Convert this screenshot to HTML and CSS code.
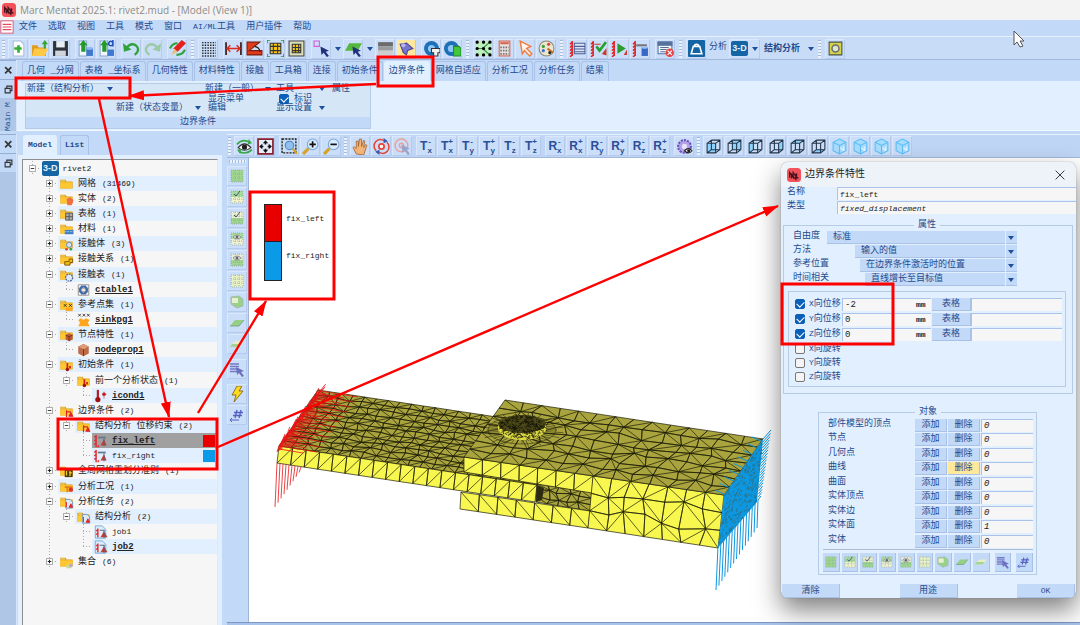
FILE: index.html
```
<!DOCTYPE html>
<html lang="zh-CN">
<head>
    <meta charset="UTF-8">
    <meta name="viewport" content="width=device-width, initial-scale=1.0">
    <title>Marc Mentat 2025.1</title>
    <link rel="stylesheet" href="styles.css">
</head>
<body>
    <header class="titlebar"><span data-icon="logo"></span>Marc Mentat 2025.1: rivet2.mud - [Model (View 1)]</header>

    <nav class="menubar">
        <span data-icon="menu"></span>
        <a href="#">文件</a><a href="#">选取</a><a href="#">视图</a><a href="#">工具</a><a href="#">模式</a><a href="#">窗口</a><a href="#"><span class="latin">AI/ML</span>工具</a><a href="#">用户插件</a><a href="#">帮助</a>
    </nav>

    <div class="toolbar main-toolbar">
        <i class="grip"></i>
        <div class="group" data-buttons="new open save"></div>
        <div class="group" data-buttons="import importd"></div>
        <div class="group" data-buttons="undo redo"></div>
        <div class="group" data-buttons="brush"></div>
        <i class="grip"></i>
        <div class="group" data-buttons="dots"></div>
        <div class="group" data-buttons="distance angle area frame"></div>
        <div class="group drop" data-buttons="pick"></div>
        <div class="group drop" data-buttons="pickface"></div>
        <div class="group" data-buttons="gradient light"></div>
        <div class="group" data-buttons="camera cameradoc"></div>
        <i class="grip"></i>
        <div class="group" data-buttons="nodes calc hand2 palette"></div>
        <i class="grip"></i>
        <div class="group" data-buttons="bclist bccheck bcplay bcdb"></div>
        <div class="group" data-buttons="cancel"></div>
        <i class="grip"></i>
        <div class="group" data-buttons="weight"></div>
        <span class="analysis">分析</span>
        <button class="drop wide"><b class="badge3d">3-D</b></button>
        <button class="drop flat">结构分析</button>
        <i class="grip"></i>
        <div class="group" data-buttons="circle"></div>
    </div>

    <section class="ribbon-area">
        <aside class="dock">
            <span data-icon="close"></span>
            <span data-icon="restore"></span>
            <span class="dock-tab">Main M</span>
        </aside>
        <div class="ribbon">
            <nav class="tabs">
                <a href="#">几何 _分网</a><a href="#">表格 _坐标系</a><a href="#">几何特性</a><a href="#">材料特性</a><a href="#">接触</a><a href="#">工具箱</a><a href="#">连接</a><a href="#">初始条件</a><a href="#" class="active">边界条件</a><a href="#">网格自适应</a><a href="#">分析工况</a><a href="#">分析任务</a><a href="#">结果</a>
            </nav>
            <div class="ribbon-group">
                <div class="ribbon-grid">
                    <button class="drop r-struct">新建（结构分析）</button>
                    <button class="drop r-general">新建（一般）</button>
                    <button class="drop r-tools">工具</button>
                    <button class="r-props">属性</button>
                    <button class="r-menu">显示菜单</button>
                    <label class="r-ident"><input type="checkbox" checked>标识</label>
                    <button class="drop r-state">新建（状态变量）</button>
                    <button class="r-edit">编辑</button>
                    <button class="drop r-set">显示设置</button>
                </div>
                <div class="ribbon-title">边界条件</div>
            </div>
        </div>
    </section>

    <main class="workspace">
        <aside class="dock">
            <span data-icon="close"></span>
            <span data-icon="restore"></span>
        </aside>
        <section class="model-panel">
            <nav class="tabs model-tabs"><a href="#" class="active">Model</a><a href="#">List</a></nav>
            <div class="tree" id="tree"></div>
        </section>
        <section class="view">
            <div class="toolbar view-toolbar">
                <i class="grip"></i>
                <div class="group" data-buttons="eye fit"></div>
                <div class="group" data-buttons="zoombox zoomin zoomout"></div>
                <i class="grip"></i>
                <div class="group" data-buttons="hand rotate rotpick"></div>
                <div class="group" data-axes="T"></div>
                <div class="group" data-axes="R"></div>
                <div class="group" data-buttons="gear"></div>
                <i class="grip"></i>
                <div class="group" data-buttons="cubefront cubeback cubeleft cuberight cubetop cubebottom iso iso iso iso"></div>
            </div>
            <div class="view-body">
                <div class="side-toolbar">
                    <i class="grip-h"></i>
                    <div class="column" data-buttons="selall selcheck selinv viseye viseye2 gridpale solid face facepale"></div>
                    <div class="column" data-buttons="listpick"></div>
                    <div class="column" data-buttons="bolt hash"></div>
                </div>
                <div class="canvas">
                    <svg class="model" id="model" aria-hidden="true"></svg>
                    <ul class="legend">
                        <li class="red">fix_left</li>
                        <li class="blue">fix_right</li>
                    </ul>
                </div>
            </div>
            <div class="statusbar"></div>
        </section>
    </main>

    <form class="dialog">
        <header><span data-icon="logo"></span><h2>边界条件特性</h2><button type="button" class="x" aria-label="Close" data-icon="thinx"></button></header>
        <div class="field"><label for="name">名称</label><input id="name" class="latin" value="fix_left"></div>
        <div class="field"><label for="type">类型</label><input id="type" class="latin italic" value="fixed_displacement"></div>

        <fieldset class="props">
            <legend>属性</legend>
            <div class="option opt-1"><label for="dof">自由度</label><span class="combo"><select id="dof"><option>标准</option></select></span></div>
            <div class="option opt-2"><label for="method">方法</label><span class="combo"><select id="method"><option>输入的值</option></select></span></div>
            <div class="option opt-3"><label for="ref">参考位置</label><span class="combo"><select id="ref"><option>在边界条件激活时的位置</option></select></span></div>
            <div class="option opt-4"><label for="time">时间相关</label><span class="combo"><select id="time"><option>直线增长至目标值</option></select></span></div>
            <div class="dofs" id="dofs"></div>
        </fieldset>

        <fieldset class="objects">
            <legend>对象</legend>
            <div class="object-rows" id="objects"></div>
            <div class="object-tools" data-buttons="selall selcheck selinv viseye viseye2 gridpale solid face facepale listpick hash"></div>
        </fieldset>

        <footer><button type="button">清除</button><button type="button">用途</button><button type="button" class="latin">OK</button></footer>
    </form>

    <svg class="notes" aria-hidden="true">
        <defs>
            <marker id="head" markerUnits="userSpaceOnUse" markerWidth="18" markerHeight="12" refX="15" refY="5" orient="auto"><path d="M0 0L16 5L0 10z" fill="#fe0000"/></marker>
        </defs>
        <g fill="none" stroke="#fe0000" stroke-width="3">
            <rect x="16" y="78" width="114" height="20"/>
            <rect x="378" y="57" width="55" height="29"/>
            <rect x="250" y="192" width="84" height="107"/>
            <rect x="58" y="419" width="159" height="50"/>
            <rect x="782" y="284" width="111" height="60"/>
        </g>
        <g stroke="#fe0000" stroke-width="2.4">
            <path d="M376 84L129 96" marker-end="url(#head)"/>
            <path d="M99 99L169 417" marker-end="url(#head)"/>
            <path d="M198 413L266 301" marker-end="url(#head)"/>
            <path d="M218 447L778 206" marker-end="url(#head)"/>
        </g>
        <path d="M1014 31v14l3-3 3 5 3-1-3-5h4z" fill="#fff" stroke="#555"/>
    </svg>

    <script src="script.js"></script>
</body>
</html>
```
FILE: styles.css
```
* {
    box-sizing: border-box;
}
body {
    margin: 0;
    height: 100vh;
    display: flex;
    flex-direction: column;
    overflow: hidden;
    position: relative;
    background-color: #c3d9f8;
    color: #234a8c;
    font-family: "Liberation Mono", "Noto Sans CJK SC", monospace;
    font-size: 9px;
    line-height: 10px;
}
a {
    color: inherit;
    text-decoration: none;
}
button, input, select {
    font: inherit;
    color: inherit;
    margin: 0;
    padding: 0;
    border: 0;
    background: none;
    border-radius: 0;
    white-space: nowrap;
}
svg {
    display: block;
}
.latin {
    font-size: 8px;
}
.titlebar {
    display: flex;
    align-items: center;
    gap: 4px;
    height: 20px;
    padding-left: 2px;
    background-color: #f3f3f3;
    color: #8b8b8b;
    font-family: "Open Sans", sans-serif;
    font-size: 10px;
}
.titlebar svg {
    width: 14px;
    height: 14px;
}
.menubar {
    display: flex;
    align-items: center;
    gap: 11px;
    height: 16px;
    padding-bottom: 2px;
}
.menubar span[data-icon] {
    margin-right: -6px;
}
.menubar svg {
    width: 14px;
    height: 14px;
}

/* toolbars */
.toolbar {
    display: flex;
    align-items: center;
    gap: 5px;
    background-color: #c8dcf8;
}
.main-toolbar {
    height: 24px;
    padding: 1px 0 0 2px;
    border-top: 1px solid #e6f1fe;
    border-bottom: 1px solid #a3b8da;
}
.group {
    display: flex;
    gap: 1px;
    align-items: center;
}
.toolbar button, .column button {
    width: 20px;
    height: 20px;
    display: flex;
    align-items: center;
    justify-content: center;
    background-color: #cbdef9;
    border: 1px solid #dbe8fb;
    border-right-color: #b5cbed;
    border-bottom-color: #b5cbed;
}
.toolbar svg {
    width: 17px;
    height: 17px;
}
.toolbar .on {
    background-color: #ffe79c;
}
.grip {
    width: 3px;
    height: 18px;
    margin: 0 -1px;
    background: repeating-linear-gradient(#a5bbdc 0 1px, #e9f2fe 1px 3px);
}
.main-toolbar .grip:first-child {
    margin: 0 -2px 0 0;
}
.drop::after {
    content: "";
    border: 3px solid transparent;
    border-top: 4px solid #1f4f9c;
    border-bottom: 0;
}
.group.drop {
    gap: 4px;
    margin-right: -3px;
}
.analysis {
    padding-bottom: 4px;
    margin: 0 -3px 0 -2px;
}
.toolbar .wide {
    width: 31px;
    gap: 4px;
}
.toolbar .flat {
    width: auto;
    gap: 8px;
    margin-left: -1px;
    border: 0;
    background: none;
    font-weight: bold;
}
.badge3d {
    padding: 3px 1px;
    border-radius: 2px;
    background-color: #1565a5;
    color: #e3effb;
    font: bold 9px/9px "Liberation Sans", sans-serif;
}

/* ribbon */
.ribbon-area {
    display: flex;
    height: 71px;
}
.dock {
    flex: none;
    width: 17px;
    display: flex;
    flex-direction: column;
    align-items: center;
    background-color: #b0c6e6;
    border-right: 1px solid #d6e5fa;
}
.dock span[data-icon] {
    width: 100%;
    height: 19px;
    padding: 5px 0 0 4px;
    border-top: 1px solid #96aed3;
    background-color: #c3d9f8;
}
.dock svg {
    width: 9px;
    height: 9px;
}
.dock-tab {
    flex: 1;
    writing-mode: vertical-rl;
    transform: rotate(180deg);
    font-size: 8px;
}
.ribbon {
    flex: 1;
    display: flex;
    flex-direction: column;
    background-color: #e2effe;
    border-bottom: 1px solid #f2f8ff;
}
.tabs {
    display: flex;
    gap: 1px;
    align-items: flex-end;
    height: 21px;
    padding: 0 5px;
    background-color: #c3d9f8;
    white-space: pre;
}
.tabs a {
    padding: 4px 4px 5px;
    border: 1px solid #a9c1e6;
    border-bottom: 0;
    border-radius: 3px 3px 0 0;
}
.tabs .active {
    background-color: #e2effe;
    border-color: #e2effe;
}
.ribbon-group {
    width: 346px;
    margin: 2px 0 0 8px;
    border: 1px solid #b5cbe6;
    background-color: #d5e6f6;
}
.ribbon-grid {
    display: grid;
    grid-template-columns: 89px 92px 68px 56px 1fr;
    grid-template-rows: 10px 9px 10px;
    padding: 0 0 4px 1px;
}
.ribbon-grid button, .ribbon-grid label {
    display: flex;
    align-items: center;
    line-height: 10px;
    white-space: nowrap;
}
.ribbon-grid .drop {
    justify-content: space-between;
    padding-right: 7px;
}
.ribbon-grid .r-struct { grid-area: 1 / 1; padding-right: 3px; }
.ribbon-grid .r-general { grid-area: 1 / 3; margin-left: -3px; padding-right: 5px; }
.r-tools { grid-area: 1 / 4; }
.r-props { grid-area: 1 / 5; }
.r-menu { grid-area: 2 / 3; }
.r-ident { grid-area: 2 / 4; padding-left: 3px; gap: 5px; }
.r-state { grid-area: 3 / 2; }
.r-edit { grid-area: 3 / 3; }
.r-set { grid-area: 3 / 4; }
.ribbon-title {
    height: 11px;
    background-color: #c3d9f8;
    text-align: center;
}
input[type="checkbox"] {
    appearance: none;
    flex: none;
    width: 10px;
    height: 10px;
    border: 1px solid #777;
    border-radius: 2px;
    background-color: #f4f4f4;
}
input[type="checkbox"]:checked {
    display: flex;
    justify-content: center;
    border-color: #0a5fb8;
    background-color: #0a5fb8;
}
input[type="checkbox"]:checked::after {
    content: "";
    width: 4px;
    height: 6px;
    border: solid #fff;
    border-width: 0 1px 1px 0;
    transform: rotate(45deg);
}

/* model tree */
.workspace {
    flex: 1;
    min-height: 0;
    display: flex;
    padding-top: 3px;
}
.model-panel {
    flex: none;
    width: 204px;
    margin-left: 1px;
    display: flex;
    flex-direction: column;
    background-color: #e2effe;
}
.model-tabs {
    font-size: 8px;
    font-weight: bold;
    gap: 3px;
    border-bottom: 0;
}
.tree {
    flex: 1;
    margin: 4px 4px 0 4px;
    padding: 1px 0 0 1px;
    overflow: hidden;
    border: 1px solid #8e8e8e;
    border-bottom: 0;
    border-right-color: #e8e8e8;
    background-color: #f6f6f6;
    color: #222;
}
.tree-row {
    display: flex;
    height: 15px;
}
.tree-row:nth-child(7n) {
    margin-bottom: 1px;
}
.tree-row .cell {
    flex: none;
    width: 17px;
    display: grid;
    place-items: center;
}
.cell.line {
    background: repeating-linear-gradient(#aaa 0 1px, transparent 1px 3px) 8px 0 / 1px 100% no-repeat;
}
.cell.tee, .cell.box {
    background: repeating-linear-gradient(#aaa 0 1px, transparent 1px 3px) 8px 0 / 1px 100% no-repeat,
        repeating-linear-gradient(90deg, #aaa 0 1px, transparent 1px 3px) 8px 7px / 9px 1px no-repeat;
}
.cell.elbow {
    background: repeating-linear-gradient(#aaa 0 1px, transparent 1px 3px) 8px 0 / 1px 8px no-repeat,
        repeating-linear-gradient(90deg, #aaa 0 1px, transparent 1px 3px) 8px 7px / 9px 1px no-repeat;
}
.cell svg {
    width: 7px;
    height: 7px;
}
.node {
    flex: 1;
    display: flex;
    align-items: center;
    gap: 4px;
    padding: 0 2px 0 1px;
    white-space: pre;
}
.node > svg {
    flex: none;
    width: 15px;
    height: 14px;
}
.tree-row:nth-child(even) .node {
    background-color: #e2effe;
}
.tree-row .node.selected {
    background-color: #a0a0a0;
}
.node .count {
    font-size: 8px;
    margin-left: 2px;
}
.node .current {
    font-weight: bold;
    text-decoration: underline;
}
.node .swatch {
    width: 12px;
    height: 12px;
    margin-left: auto;
}
.swatch.red { background-color: #e80000; }
.swatch.blue { background-color: #0a9ae8; }

/* 3-D view */
.view {
    flex: 1;
    min-width: 0;
    display: flex;
    flex-direction: column;
    padding-left: 5px;
}
.view-toolbar {
    height: 24px;
    gap: 4px;
    padding-left: 2px;
    border-top: 1px solid #e6f1fe;
    border-bottom: 1px solid #a3b8da;
    background-color: #bfd5f5;
}
.view-body {
    flex: 1;
    min-height: 0;
    display: flex;
}
.side-toolbar {
    flex: none;
    width: 22px;
    display: flex;
    flex-direction: column;
    gap: 5px;
    border-right: 1px solid #9fb4d6;
}
.side-toolbar svg {
    width: 16px;
    height: 16px;
}
.grip-h {
    height: 3px;
    margin: 2px 2px -2px;
    background: repeating-linear-gradient(90deg, #a5bbdc 0 1px, #e9f2fe 1px 3px);
}
.column {
    display: flex;
    flex-direction: column;
    gap: 1px;
}
.canvas {
    flex: 1;
    position: relative;
    background-color: #fff;
}
.model {
    width: 100%;
    height: 100%;
}
.statusbar {
    height: 3px;
    border-top: 1px solid #7d97c4;
    background-color: #a9c4ec;
}
.legend {
    position: absolute;
    left: 15px;
    top: 46px;
    margin: 0;
    padding: 0;
    list-style: none;
    color: #222;
    font-size: 8px;
}
.legend li {
    display: flex;
    gap: 4px;
    height: 37px;
    line-height: 30px;
}
.legend li::before {
    content: "";
    width: 16px;
    height: 38px;
    border: 1px solid #222;
}
.legend .red::before { background-color: #e80000; }
.legend .blue::before { background-color: #0a9ae8; }
.axis {
    display: flex;
    align-items: center;
    color: #2a4f96;
    font: bold 12px/12px "Liberation Sans", sans-serif;
}
.axis-mark {
    display: flex;
    flex-direction: column;
    padding-bottom: 1px;
    font-size: 8px;
    line-height: 9px;
}

/* dialog */
.dialog {
    position: absolute;
    top: 162px;
    right: 4px;
    width: 295px;
    display: flex;
    flex-direction: column;
    overflow: hidden;
    border-radius: 7px;
    background-color: #e2effe;
    box-shadow: 0 0 1px #666, 0 12px 26px rgba(0, 0, 0, 0.5);
}
.dialog header {
    display: flex;
    align-items: center;
    gap: 4px;
    height: 25px;
    padding: 0 9px 0 6px;
    background-color: #eef3f9;
}
.dialog header svg {
    width: 14px;
    height: 14px;
}
.dialog h2 {
    flex: 1;
    margin: 0;
    color: #222;
    font-size: 10px;
    font-weight: normal;
}
.dialog input:not([type]) {
    min-width: 0;
    height: 13px;
    padding-left: 2px;
    border-top: 1px solid #a9c3ea;
    border-left: 1px solid #a9c3ea;
    background-color: #f6f6f6;
    color: #222;
}
.dialog .italic {
    font-style: italic;
}
.field {
    display: flex;
    margin-bottom: 1px;
    padding-left: 6px;
}
.field label {
    width: 50px;
}
.field input {
    flex: 1;
}
fieldset {
    min-width: 0;
    margin: 0;
    padding: 0;
    border: 1px solid #b5cbe6;
}
legend {
    margin: 0 auto;
    padding: 0 4px;
}
.props {
    margin: 5px 3px 0 2px;
    padding: 1px 6px 6px 4px;
}
.option {
    display: flex;
    height: 14px;
    padding: 0 49px 0 5px;
}
.opt-1 label { width: 34px; }
.opt-2 label { width: 62px; }
.opt-3 label { width: 67px; }
.opt-4 label { width: 72px; }
.combo {
    flex: 1;
    display: flex;
    position: relative;
}
.combo select {
    appearance: none;
    flex: 1;
    height: 13px;
    padding-left: 6px;
    line-height: 13px;
    background-color: #c3d9f8;
    border-bottom: 1px solid #aac2e6;
}
.combo::after {
    content: "";
    position: absolute;
    right: 3px;
    top: 5px;
    border: 3px solid transparent;
    border-top: 4px solid #1f4f9c;
    border-bottom: 0;
}
.combo::before {
    content: "";
    position: absolute;
    right: 11px;
    top: 0;
    width: 1px;
    height: 13px;
    background-color: #e2effe;
}
.dofs {
    margin-top: 4px;
    padding: 5px 3px 2px 6px;
    border: 1px solid #b5cbe6;
}
.dof {
    display: flex;
    align-items: center;
    height: 14px;
}
.dof.active {
    margin-bottom: 1px;
}
.dof label {
    width: 33px;
    margin-left: 4px;
    white-space: nowrap;
}
.dof .value {
    width: 64px;
}
.dof .unit {
    width: 25px;
    height: 13px;
    padding: 1px 0 0 10px;
    border-top: 1px solid #a9c3ea;
    background-color: #f6f6f6;
    color: #222;
    font-size: 8px;
    font-weight: bold;
}
.dof .table {
    flex: 1;
}
.dof button, .object-rows button, .dialog footer button {
    height: 13px;
    background-color: #c3d9f8;
    border-right: 1px solid #a9c1e6;
    border-bottom: 1px solid #a9c1e6;
}
.dof button {
    width: 39px;
    margin-left: 1px;
}
.objects {
    margin: 13px 39px 0 37px;
    padding: 2px 3px 2px 4px;
}
.object-rows {
    display: grid;
    grid-template-columns: 1fr 32px 32px 52px;
    grid-auto-rows: 1fr;
    gap: 0 1px;
    min-height: 130px;
    padding-left: 5px;
}
.object-rows .hot {
    background-color: #ffe79c;
}
.object-tools {
    display: flex;
    gap: 2px;
    padding-top: 3px;
    border-top: 1px solid #a9bcd6;
}
.object-tools button {
    flex: 1;
    height: 19px;
    padding: 1px;
    background-color: #c3d9f8;
    border-right: 1px solid #a9c1e6;
    border-bottom: 1px solid #a9c1e6;
}
.object-tools button:nth-last-child(-n+2) {
    margin-left: 3px;
}
.object-tools svg {
    width: 100%;
    height: 14px;
}
.dialog footer {
    display: flex;
    justify-content: space-between;
    margin-top: 9px;
    padding: 0 1px;
}
.dialog footer button {
    width: 58px;
    height: 14px;
}
.notes {
    position: absolute;
    inset: 0;
    width: 100%;
    height: 100%;
    pointer-events: none;
}
```
FILE: script.js
```
const folder = '<path d="M1 3h6l1 2h7v8H1z" fill="#d99a10"/><path d="M1 6h14l-1 7H1z" fill="#ffc832"/><path d="M2 4h4l1 1H2z" fill="#ffe48a"/>';
const leafMesh = (upper, lower) => `<path d="M2 2h12v6H2z" fill="${upper}"/><path d="M2 8h12v6H2z" fill="${lower}"/><path d="M2 2h12v12H2zM6 2v12M10 2v12M2 6h12M2 10h12" fill="none" stroke="#8aabaa" stroke-width=".8" stroke-dasharray="1 1"/>`;
const cube = (fill) => `${fill}<path d="M2 5h8v9H2zM6 2h8v9M2 5l4-3M10 5l4-3M10 14l4-3M6 2v9h8M2 14l4-3" fill="none" stroke="#243447"/>`;
const magnifier = (sign) => `<circle cx="10" cy="6" r="5" fill="#d9ecff" stroke="#7aa6d6"/><path d="M6 10l-5 5" stroke="#d6a32a" stroke-width="3"/><path d="${sign}" stroke="#111" stroke-width="1.6"/>`;
const wall = '<path d="M3 1v14M1 4l2-2M1 7l2-2M1 10l2-2M1 13l2-2M1 16l2-2" fill="none" stroke="#e02020" stroke-width="1.4"/>';
const pointer = '<path d="M7 6l8 4-3 1 3 4-2 1-3-4-2 2z" fill="#23307d"/>';
const eyeball = '<path d="M4 6q4-4 8 0q-4 4-8 0z" fill="#eee" stroke="#777" stroke-width=".7"/><circle cx="8" cy="6" r="1.5" fill="#666"/>';

const icons = {
    logo: '<rect width="16" height="16" rx="4" fill="#f4525a"/><path d="M3 11V5l4 6V5l4 6V6M5 12V7l5 6V8l3 4" fill="none" stroke="#43131c" stroke-width="1.3"/>',
    menu: '<rect x="1" y="1" width="14" height="14" fill="#fff" stroke="#e34b60"/><path d="M3 5h10M3 8h10M3 11h10" stroke="#e34b60" stroke-width="1.3"/>',
    close: '<path d="M2 2l11 11M13 2L2 13" stroke="#333" stroke-width="3"/>',
    thinx: '<path d="M3 3l10 10M13 3L3 13" stroke="#333" stroke-width="1.1"/>',
    restore: '<path d="M5 6V2h9v8h-3M2 6h9v8H2z" fill="none" stroke="#333" stroke-width="2"/>',
    new: '<path d="M3 1h7l3 3v11H3z" fill="#fff" stroke="#a9bed8"/><path d="M8 5v7M4 8h7" stroke="#36ae34" stroke-width="2.5"/>',
    open: '<path d="M1 5h5l1 2h7v8H1z" fill="#e29a1c"/><path d="M3 8h13l-3 7H1z" fill="#ffc845"/><path d="M12 8V4h-2l3-4 3 4h-2v4z" fill="#36a432"/>',
    save: '<path d="M1 1h14v14H1z" fill="#30343a"/><path d="M4 1h8v6H4z" fill="#e8eef5"/><path d="M3 10h10v5H3z" fill="#cfd5dd"/>',
    import: '<path d="M2 1h7v14H2z" fill="#f2f7fd" stroke="#8ca8cb"/><path d="M4 11V5H2l4-5 4 5H8v6z" fill="#239a2c"/><path d="M9 8h6v7H9z" fill="#3d78cf"/><ellipse cx="12" cy="8" rx="3" ry="1.3" fill="#8db7f0"/>',
    importd: '<path d="M2 1h7v14H2z" fill="#f2f7fd" stroke="#8ca8cb"/><path d="M4 11V5H2l4-5 4 5H8v6z" fill="#239a2c"/><path d="M9 9h6v6H9z" fill="#3d78cf"/><path d="M14 0v6M14 4a2 2 0 1 0-3 1q2 1 3-1" fill="none" stroke="#1d4bc0" stroke-width="1.4"/>',
    undo: '<path d="M3 8q4-6 9-3q5 4-1 9" fill="none" stroke="#2fa33a" stroke-width="2.2"/><path d="M0 3l1 8 7-2z" fill="#2fa33a"/>',
    redo: '<path d="M13 8q-4-6-9-3q-5 4 1 9" fill="none" stroke="#9dc9a6" stroke-width="2.2"/><path d="M16 3l-1 8-7-2z" fill="#9dc9a6"/>',
    brush: '<path d="M1 8q2-5 7-5M15 9q-2 5-8 5" stroke="#2fa33a" stroke-width="2" fill="none"/><path d="M12 0l4 3-8 8-4-3z" fill="#e2201c"/><path d="M5 8l3 3-6 3z" fill="#e9bc85"/>',
    dots: '<path d="M2 2.5h13M2 5h13M2 7.5h13M2 10h13M2 12.5h13M2 15h13" stroke="#222" stroke-width="1.3" stroke-dasharray="1.3 1.2"/>',
    distance: '<path d="M1 2v12M15 2v12" stroke="#3c1a18" stroke-width="1.6"/><path d="M2 8h12M5 5L2 8l3 3M11 5l3 3-3 3" stroke="#d92b1c" fill="none" stroke-width="1.4"/>',
    angle: '<path d="M1 2h12L3 10h12v4H1z" fill="#e03a1b" stroke="#7a1d10"/><path d="M8 6q5 1 5 5" stroke="#222" fill="none"/>',
    area: '<path d="M3 3h10v10H3z" fill="#f3c818" stroke="#333"/><path d="M6 3v10M10 3v10M3 6h10M3 10h10" stroke="#333"/><path d="M0 3V0h3M13 0h3v3M0 13v3h3M16 13v3h-3" stroke="#2d9c30" fill="none" stroke-width="1.5"/>',
    frame: '<path d="M1 1h14v14H1z" fill="#dcdfb9" stroke="#444"/><path d="M4 4h8v8H4z" fill="#f3c818" stroke="#333"/><path d="M7 4v8M10 4v8M4 7h8M4 10h8" stroke="#333"/>',
    pick: `<path d="M1 1h5v5H1z" fill="none" stroke="#d35ce0"/>${pointer}`,
    pickface: `<path d="M4 3h12l-4 7H0z" fill="#55b83c"/>${pointer}`,
    gradient: '<path d="M1 2h14v4H1z" fill="#6c6c6c"/><path d="M1 6h14v4H1z" fill="#9b9b9b"/><path d="M1 10h14v4H1z" fill="#cdcdcd"/>',
    light: '<path d="M2 4l6-1 6 5-5 2-1 4-3-2z" fill="#7774cd" stroke="#4a468f"/><circle cx="5" cy="5" r="2" fill="#b6b3ef"/>',
    camera: '<circle cx="8" cy="8" r="7" fill="#1b70b8"/><circle cx="8" cy="8" r="3.4" fill="#8fc6f3"/><path d="M8 8h8v4h-2v3h-4v-3H8z" fill="#f2f2f2" stroke="#333"/>',
    cameradoc: '<circle cx="7" cy="8" r="7" fill="#1b70b8"/><circle cx="7" cy="8" r="3.4" fill="#8fc6f3"/><path d="M9 6h5l2 2v7H9z" fill="#42c93b" stroke="#1d8a28"/>',
    nodes: '<path d="M1 1h14v14H1z" fill="#bdeebd"/><path d="M2 8h7M7 8l7-6M7 8l7 6" stroke="#2f8a49" fill="none"/><path d="M2 2h.1M8 2h.1M14 2h.1M2 8h.1M8 8h.1M2 14h.1M8 14h.1M14 14h.1M14 8h.1" stroke="#000" stroke-width="3" stroke-linecap="round"/>',
    calc: '<rect x="3" y="1" width="10" height="14" fill="#e9e1df" stroke="#d9654d"/><path d="M4 3h8" stroke="#d9654d" stroke-width="2"/><path d="M4 7h8M4 10h8M4 13h8" stroke="#777" stroke-width="1.6" stroke-dasharray="1.5 1"/>',
    hand2: '<path d="M3 1l10 5-4 2 5 5-2 2-5-5-2 3z" fill="#fff4ea" stroke="#f07a3c" stroke-width="1.3"/>',
    palette: '<circle cx="8" cy="8" r="7" fill="#ece6cf" stroke="#8c8870"/><circle cx="5" cy="6" r="1.5" fill="#35a33c"/><circle cx="10" cy="4" r="1.5" fill="#dd3e35"/><circle cx="5" cy="10" r="1.5" fill="#3c6edb"/><path d="M9 8l5 4" stroke="#c36a24" stroke-width="2"/><circle cx="11" cy="12" r="1.4" fill="#222"/>',
    bclist: `${wall}<path d="M5 3h10v10H5z" fill="#dbe6f8" stroke="#4b5f95"/><path d="M5 6h10M5 8.500h10M5 11h10" stroke="#4b5f95"/>`,
    bccheck: `${wall}<path d="M4 4h6M12 13l3-4v5z" stroke="#c83a2a" fill="#c83a2a"/><path d="M6 6l3 4 6-8" fill="none" stroke="#28a02c" stroke-width="2.4"/>`,
    bcplay: `${wall}<path d="M6 3l8 5-8 5z" fill="#2d9c30"/><path d="M12 14l3-5v5z" fill="#c83a2a"/>`,
    bcdb: `${wall}<path d="M4 5h10" stroke="#777" stroke-width="2"/><path d="M9 7h6v8H9z" fill="#3767c8"/><ellipse cx="12" cy="7" rx="3" ry="1.3" fill="#9dbdf0"/>`,
    cancel: '<path d="M1 2h13v11H1z" fill="#f3f6fb" stroke="#56729c"/><path d="M1 2h13v3H1zM3 7h8M3 9h6M3 11h5" fill="#56729c" stroke="#56729c"/><circle cx="12" cy="12" r="4" fill="#e54545"/><path d="M10 10l4 4M14 10l-4 4" stroke="#fff"/>',
    weight: '<rect width="16" height="16" rx="1" fill="#1565a5"/><path d="M5 6h6l2 7H3zM6 6a2 2 0 1 1 4 0" fill="none" stroke="#fff" stroke-width="1.5"/>',
    circle: '<path d="M2 2h12v12H2z" fill="#d8d344" stroke="#47534c"/><circle cx="8" cy="8" r="3.3" fill="#e2e6c5" stroke="#65707c" stroke-width="1.4"/>',
    eye: '<path d="M2 9q6-7 12 0q-6 5-12 0z" fill="#fff" stroke="#333"/><circle cx="8" cy="8.500" r="2.500" fill="#222"/><path d="M1 6q5-6 12-2M15 11q-5 5-12 2" fill="none" stroke="#38a84b" stroke-width="1.6"/><path d="M12 1l3 4-4 1zM4 15l-3-4 4-1z" fill="#38a84b"/>',
    fit: '<path d="M1 1h14v14H1z" fill="#e6eefb" stroke="#8c1f2c" stroke-width="1.6"/><path d="M8 2l2.500 3h-5zM8 14l2.500-3h-5zM2 8l3-2.500v5zM14 8l-3-2.500v5z" fill="#111"/><path d="M8 4v2M8 10v2M4 8h2M10 8h2" stroke="#111" stroke-width="1.6"/>',
    zoombox: '<path d="M1 1h13v13H1z" fill="none" stroke="#222" stroke-width="1.3" stroke-dasharray="2 1"/><circle cx="8" cy="7" r="4" fill="#8fc0f0" stroke="#4b81bf"/><path d="M11 10l4 5" stroke="#d6a32a" stroke-width="2"/>',
    zoomin: magnifier('M10 3v6M7 6h6'),
    zoomout: magnifier('M7 6h6'),
    hand: '<path d="M4 15l-3-6 1-1 2 2V3h2v5l1-7h2v7l2-6 1 1-1 6 2-3 1 1-3 9z" fill="#f2b479" stroke="#9e5b25" stroke-width=".7"/>',
    rotate: '<circle cx="8" cy="8" r="2.500" fill="#fff" stroke="#e84435" stroke-width="1.6"/><path d="M3 12a6 6 0 0 1 8-9M13 4a6 6 0 0 1-8 9" fill="none" stroke="#e84435" stroke-width="1.4"/><path d="M10 0l4 3-4 2zM6 16l-4-3 4-2z" fill="#355bb5"/>',
    rotpick: '<circle cx="7" cy="7" r="6" fill="none" stroke="#e9a19b" stroke-width="1.4"/><circle cx="7" cy="7" r="2" fill="none" stroke="#e9a19b" stroke-width="1.4"/><path d="M7 6l8 4-3 1 3 4-2 1-3-4-2 2z" fill="#9aa3cd"/>',
    gear: '<circle cx="8" cy="8" r="6" fill="#b2a1e8" stroke="#6d56bd" stroke-width="2" stroke-dasharray="2 1"/><circle cx="8" cy="8" r="2.500" fill="#e8e2fa"/><path d="M8 12q4-4 7 0q-3 4-7 0z" fill="#fff" stroke="#222"/><circle cx="12" cy="12" r="1.5" fill="#222"/>',
    cubefront: cube('<path d="M2 5h8v9H2z" fill="#8cd4ff"/>'),
    cubeback: cube('<path d="M6 2h8v9H6z" fill="#8cd4ff"/>'),
    cubeleft: cube('<path d="M2 5l4-3v9l-4 3z" fill="#8cd4ff"/>'),
    cuberight: cube('<path d="M10 5l4-3v9l-4 3z" fill="#8cd4ff"/>'),
    cubetop: cube('<path d="M2 5l4-3h8l-4 3z" fill="#8cd4ff"/>'),
    cubebottom: cube('<path d="M2 14l4-3h8l-4 3z" fill="#8cd4ff"/>'),
    iso: '<path d="M8 1l6 3v8l-6 3-6-3V4z" fill="#a8dcff" stroke="#5cbdf5"/><path d="M2 4l6 3 6-3M8 7v8" fill="none" stroke="#5cbdf5"/><path d="M9 9l3 3M12 8v4" stroke="#ecf8ff"/>',
    selall: leafMesh('#9fd68c', '#9fd68c'),
    selcheck: leafMesh('#a9dd9c', '#f5f3c8') + '<path d="M5 5l2 2 4-5" fill="none" stroke="#456"/>',
    selinv: leafMesh('#eeeed0', '#9fd68c') + '<path d="M5 5l2 2 4-5" fill="none" stroke="#456"/>',
    viseye: leafMesh('#a9dd9c', '#f2f1d2') + eyeball,
    viseye2: leafMesh('#ebebdb', '#9fd68c') + eyeball,
    gridpale: leafMesh('#ebf0c2', '#ebf0c2'),
    solid: '<path d="M2 3l8-1 4 3v7l-6 2-6-4z" fill="#9ad08c" stroke="#a4bcb0"/><path d="M3 4h6v5H3z" fill="#e8efd0"/>',
    face: '<path d="M6 5h9l-5 6H1z" fill="#95ce85"/><path d="M1 11h9l5-6" fill="none" stroke="#78a78a"/>',
    facepale: '<path d="M6 5h9l-5 6H1z" fill="#e8edc6"/><path d="M1 11h9l2-3H3z" fill="#a5d492"/>',
    listpick: '<path d="M1 3h9M1 5.500h9M1 8h9M1 10.500h9" stroke="#7479c4" stroke-width="1.6"/><path d="M7 6l8 4-3 1 3 4-2 1-3-4-2 2z" fill="#6c71bf"/>',
    bolt: '<path d="M8 0h5l-3 5h4L5 16l2-7H3z" fill="#ffd91f" stroke="#8f7420"/>',
    hash: '<path d="M8 3L6 11M12 3l-2 8M5 5.500h9M4 8.500h9" stroke="#5360bf" stroke-width="1.3"/><path d="M1 13h9M1 13l2-2M1 13l2 2" stroke="#5360bf" fill="none"/>',
    folder,
    fsolid: folder + '<path d="M8 8l4-2 4 3-2 6H9z" fill="#ee7048"/>',
    ftable: folder + '<path d="M7 7h8v8H7z" fill="#aaa" stroke="#555"/><path d="M11 7v8M7 11h8" stroke="#555"/>',
    fmat: folder + '<path d="M6 9h10v5H6z" fill="#3e7fc4"/><path d="M6 11h10" stroke="#a4cdf2" stroke-dasharray="2 1"/>',
    fbody: folder + '<circle cx="11" cy="9" r="3" fill="#d7e3f7" stroke="#5481c2"/><circle cx="8" cy="14" r="1.5" fill="#e03b2d"/><circle cx="13" cy="14" r="1.5" fill="#35a043"/>',
    frel: folder + '<path d="M6 11h5V8h4v4h-3v3H6z" fill="#f5bd12" stroke="#735105"/>',
    fctab: folder + '<circle cx="11" cy="11" r="4" fill="#dfe9f7" stroke="#48659c" stroke-width="1.5" stroke-dasharray="2 1"/>',
    ctab: '<path d="M2 2h12v12H2zM2 6h12M2 10h12M6 2v12M10 2v12" fill="none" stroke="#777" stroke-width=".8"/><circle cx="8" cy="8" r="4" fill="none" stroke="#416bab" stroke-width="2.500"/>',
    fref: folder + '<path d="M5 7l3 3M8 7l-3 3M11 7l3 3M14 7l-3 3" stroke="#222"/><path d="M7 11h8v4H7z" fill="#ffa51e"/>',
    ref: '<path d="M2 8l3-2 3 2 3-2 4 2-2 3 2 4H2l2-4z" fill="#ffa51e"/><path d="M2 1l3 3M5 1L2 4M7 1l3 3M10 1L7 4M12 1l3 3M15 1l-3 3" stroke="#222" stroke-width=".9"/>',
    fnode: folder + '<path d="M7 8l4-2 4 2v5l-4 2-4-2z" fill="#b95b38"/><path d="M7 8l4 2 4-2M11 10v5" stroke="#713017" fill="none"/>',
    node: '<path d="M2 4l6-3 6 3v8l-6 3-6-3z" fill="#bd6a47"/><path d="M2 4l6 3 6-3-6-3z" fill="#dd9d7b"/><path d="M8 7v8" stroke="#713017"/>',
    ficond: folder + '<path d="M9 6v7M12 9v3" stroke="#d21f1f" stroke-width="2"/><circle cx="9" cy="13" r="2" fill="#a01212"/>',
    icond: '<path d="M5 1v11" stroke="#b61c24" stroke-width="2.500"/><circle cx="5" cy="12" r="3" fill="#a01212"/><path d="M12 3v8M10 6h5" stroke="#d86868"/><circle cx="12" cy="6" r="2" fill="#c71b1b"/>',
    fbc: folder + '<path d="M8 7v8M8 9h5M11 14l2-4 2 4z" stroke="#db2525" stroke-width="1.3" fill="#db2525"/>',
    bc: '<path d="M3 1v14M1 4l2-2M1 8l2-2M1 12l2-2M6 13l-1 2" stroke="#e42a2a" stroke-width="1.6"/><path d="M5 4h9" stroke="#66788b" stroke-width="2"/><path d="M8 13l4-7 3 7z" fill="#c93b35"/><path d="M12 5v9" stroke="#4a5f77"/>',
    fglobal: folder + '<path d="M6 7h9v8H6z" fill="#46360b"/><path d="M8 8v5M11 10h3M12 8v6" stroke="#f5cb1d" stroke-width="1.5"/>',
    fcase: folder + '<path d="M6 8h9M9 8v6" stroke="#e67c1e" stroke-width="2"/><circle cx="13" cy="11" r="2.500" fill="#df3529"/>',
    fjob: folder + '<path d="M7 5h5l3 3v7H7z" fill="#dceaf9" stroke="#6b91c0"/><path d="M8 8v6M11 14l2-4 2 4z" stroke="#db2525" fill="#db2525"/>',
    job: '<path d="M2 1h8l4 4v10H2z" fill="#dceefd" stroke="#62a7de"/><path d="M5 4v10M3 7l2-2M3 11l2-2" stroke="#df2c2c" stroke-width="1.6"/><path d="M8 14l4-7 4 7z" fill="#c93b35"/><path d="M7 6h6M12 6v9" stroke="#4a5f77"/>',
    fset: folder + '<path d="M8 11h7l-2 4H8z" fill="#c7dc94"/><circle cx="13" cy="12" r="2" fill="#b7a7d7"/>',
    minus: '<path d="M1 1h14v14H1z" fill="#fff" stroke="#999" stroke-width="2"/><path d="M4 8h8" stroke="#222" stroke-width="2"/>',
    plus: '<path d="M1 1h14v14H1z" fill="#fff" stroke="#999" stroke-width="2"/><path d="M4 8h8M8 4v8" stroke="#222" stroke-width="2.500"/>'
};

const icon = (name) => `<svg viewBox="0 0 16 16" aria-hidden="true">${icons[name]}</svg>`;

document.querySelectorAll('[data-icon]').forEach(el => {
    el.innerHTML = icon(el.dataset.icon);
});
document.querySelectorAll('[data-buttons]').forEach(el => {
    el.innerHTML = el.dataset.buttons.split(' ').map(name =>
        `<button type="button" aria-label="${name}"${name === 'light' ? ' class="on"' : ''}>${icon(name)}</button>`).join('');
});
document.querySelectorAll('[data-axes]').forEach(el => {
    el.innerHTML = ['x-', 'x+', 'y-', 'y+', 'z-', 'z+'].map(a =>
        `<button type="button"><span class="axis">${el.dataset.axes}<span class="axis-mark"><span>${a[1]}</span><span>${a[0]}</span></span></span></button>`).join('');
});

// Tree rows: guide cells, icon, text, count, class, swatch
const rows = [
    ['m', null, 'rivet2'],
    [' p', 'folder', '网格', 31469],
    [' p', 'fsolid', '实体', 2],
    [' p', 'ftable', '表格', 1],
    [' p', 'fmat', '材料', 1],
    [' p', 'fbody', '接触体', 3],
    [' p', 'frel', '接触关系', 1],
    [' m', 'fctab', '接触表', 1],
    [' le', 'ctab', 'ctable1', 0, 'current'],
    [' m', 'fref', '参考点集', 1],
    [' le', 'ref', 'sinkpg1', 0, 'current'],
    [' m', 'fnode', '节点特性', 1],
    [' le', 'node', 'nodeprop1', 0, 'current'],
    [' m', 'ficond', '初始条件', 1],
    [' lm', 'ficond', '前一个分析状态', 1],
    [' l e', 'icond', 'icond1', 0, 'current'],
    [' m', 'fbc', '边界条件', 2],
    [' lm', 'fbc', '结构分析 位移约束', 2],
    [' l t', 'bc', 'fix_left', 0, 'current', 'red'],
    [' l e', 'bc', 'fix_right', 0, 'latin', 'blue'],
    [' p', 'fglobal', '全局网格重划分准则', 1],
    [' p', 'fcase', '分析工况', 1],
    [' m', 'fjob', '分析任务', 2],
    [' lm', 'fjob', '结构分析', 2],
    [' l t', 'job', 'job1', 0],
    [' l e', 'job', 'job2', 0, 'current'],
    [' p', 'fset', '集合', 6]
];
const cells = {
    ' ': '<span class="cell"></span>',
    l: '<span class="cell line"></span>',
    t: '<span class="cell tee"></span>',
    e: '<span class="cell elbow"></span>',
    m: `<span class="cell box">${icon('minus')}</span>`,
    p: `<span class="cell box">${icon('plus')}</span>`
};
document.getElementById('tree').innerHTML = rows.map(([guides, name, text, count, cls, color]) => `
    <div class="tree-row">${[...guides].map(g => cells[g]).join('')}<div class="node${color === 'red' ? ' selected' : ''}">${name ? icon(name) : '<b class="badge3d">3-D</b>'}<span class="${cls || (count ? '' : 'latin')}">${text}</span>${count ? `<span class="count">(${count})</span>` : ''}${color ? `<i class="swatch ${color}"></i>` : ''}</div></div>`).join('');

// Degrees of freedom
const dofs = [['X向位移', '-2'], ['Y向位移', '0'], ['Z向位移', '0'], ['X向旋转'], ['Y向旋转'], ['Z向旋转']];
document.getElementById('dofs').innerHTML = dofs.map(([label, value], i) => `
    <div class="dof${value ? ' active' : ''}"><input type="checkbox" id="dof${i}"${value ? ' checked' : ''}><label for="dof${i}"><span class="latin">${label[0]}</span>${label.slice(1)}</label>${value ? `<input class="value" aria-label="${label}" value="${value}"><span class="unit">mm</span><button type="button">表格</button><input class="table" aria-label="表格">` : ''}</div>`).join('');

const objects = [['部件模型的顶点', 0], ['节点', 0], ['几何点', 0], ['曲线', 0], ['曲面', 0], ['实体顶点', 0], ['实体边', 0], ['实体面', 1], ['实体', 0]];
document.getElementById('objects').innerHTML = objects.map(([label, n], i) => `
    <label for="obj${i}">${label}</label><button type="button">添加</button><button type="button"${label === '曲线' ? ' class="hot"' : ''}>删除</button><input id="obj${i}" class="italic" value="${n}">`).join('');

// Finite element model
let seed = 7;
function rand() {
    seed = (seed * 16807) % 2147483647;
    return seed / 2147483647;
}
const lerp = (p, q, t) => [p[0] + (q[0] - p[0]) * t, p[1] + (q[1] - p[1]) * t];
const pt = p => p[0].toFixed(1) + ' ' + p[1].toFixed(1);

function mesh(a, b, c, d, nu, nv, jitter, diagonal, fill) {
    const grid = [];
    for (let j = 0; j <= nv; j++) {
        grid.push([]);
        for (let i = 0; i <= nu; i++) {
            const inner = i > 0 && j > 0 && i < nu && j < nv ? jitter : 0;
            const u = (i + (rand() - 0.5) * inner) / nu;
            const v = (j + (rand() - 0.5) * inner) / nv;
            grid[j].push(lerp(lerp(a, b, u), lerp(d, c, u), v));
        }
    }
    let path = '';
    for (let j = 0; j < nv; j++) {
        for (let i = 0; i < nu; i++) {
            const [p, q, r, s] = [grid[j][i], grid[j][i + 1], grid[j + 1][i + 1], grid[j + 1][i]];
            const slash = diagonal === 'x' ? (i + j) % 2 : diagonal === '/';
            path += `M${pt(p)}L${pt(q)}L${pt(r)}L${pt(s)}z` + (slash ? `M${pt(q)}L${pt(s)}` : `M${pt(p)}L${pt(r)}`);
        }
    }
    return `<path d="M${pt(a)}L${pt(b)}L${pt(c)}L${pt(d)}z" fill="${fill}"/><path d="${path}" fill="none" stroke="#1c1c08" stroke-width=".7"/>`;
}

const topFill = '#a9a43d';
const sideFill = '#f8f750';
let art = '';
art += mesh([318, 390], [576, 429], [537, 485], [279, 446], 22, 11, 0.4, 'x', topFill);
art += mesh([279, 446], [537, 485], [535, 502], [277, 463], 19, 1, 0, '/', sideFill);
art += mesh([537, 484], [592, 492], [590, 511], [536, 502], 5, 3, 0.6, 'x', topFill);
art += '<path d="M537 485l7 3-2 12-6 2z" fill="#2c2a12"/>';
art += mesh([461, 492], [590, 511], [588, 528], [460, 509], 7, 1, 0, '\\', sideFill);
art += mesh([464, 457], [593, 476], [592, 493], [464, 472], 7, 1, 0, '/', sideFill);
art += mesh([593, 476], [724, 495], [718, 548], [588, 528], 7, 3, 0.6, 'x', sideFill);
art += mesh([505, 400], [763, 439], [724, 495], [464, 457], 14, 7, 0.5, 'x', topFill);

// finer elements round the rivet
let ring = '';
for (let k = 0; k < 40; k++) {
    const t = k * Math.PI / 20;
    const at = (rx, ry) => pt([522 + rx * Math.cos(t), 430 + ry * Math.sin(t)]);
    ring += `M${at(24, 10)}L${at(k % 2 ? 42 : 35, k % 2 ? 17 : 14)}`;
}
art += `<path d="${ring}" stroke="#1c1c08" stroke-width=".5"/><ellipse cx="522" cy="430" rx="34" ry="14" fill="none" stroke="#1c1c08" stroke-width=".5"/>`;
art += '<path d="M498 423v6q6 11 24 11t24-10v-6z" fill="#e0dc45"/><ellipse cx="522" cy="424" rx="24" ry="9" fill="#4d4a1a"/>';
let rivet = '';
for (let k = 0; k < 330; k++) {
    const t = rand() * Math.PI * 2;
    const r = Math.sqrt(rand());
    const x = 522 + 23 * r * Math.cos(t);
    const y = 427 + 12 * r * Math.sin(t);
    rivet += `M${pt([x, y])}l${((rand() - 0.5) * 7).toFixed(1)} ${((rand() - 0.5) * 5).toFixed(1)}`;
}
art += `<path d="${rivet}" stroke="#100f04" stroke-width=".6"/>`;

// left side constraints
let red = '';
for (let k = 0; k <= 44; k++) {
    const p = lerp([279, 446], [320, 391], k / 44);
    red += `M${pt(p)}l${(2 + rand() * 5).toFixed(1)} -${(5 + rand() * 5).toFixed(1)}M${pt(p)}l-2 ${(2 + rand() * 10).toFixed(1)}`;
    if (k % 4 === 0) {
        red += `M${pt(p)}l38 6M${pt([p[0], p[1] + 3])}l24 4`;
    } else {
        red += `M${pt(p)}l${(6 + rand() * 12).toFixed(1)} 2`;
    }
}
for (let k = 0; k < 9; k++) {
    const x = 277 + k * 3;
    red += `M${x} ${463 + k / 2}L${x - 2} ${507 - k * 4.3}`;
}
art += `<path d="${red}" stroke="#e81414" stroke-width=".8" fill="none"/>`;

// right side constraints
art += '<path d="M763 439L724 495L718 548L757 502z" fill="#0c97e0"/>';
let specks = '';
for (let k = 0; k < 260; k++) {
    const u = rand();
    const p = lerp(lerp([724, 495], [763, 439], u), lerp([718, 548], [757, 502], u), rand());
    specks += `M${pt(p)}l1 -2`;
}
art += `<path d="${specks}" stroke="#2f6f80" stroke-width=".8"/>`;
let blue = '';
for (let k = 0; k <= 20; k++) {
    const p = lerp([763, 439], [758, 500], k / 20);
    blue += `M${pt(p)}l${8 - k / 4} ${-9 + k / 4}`;
}
for (let k = 0; k <= 14; k++) {
    const p = lerp([718, 546], [758, 500], k / 14);
    blue += `M${pt(p)}L${pt(lerp([716, 590], [757, 528], k / 14))}`;
}
for (let k = 0; k < 9; k++) {
    const p = lerp([724, 494], [761, 441], k / 8);
    blue += `M${pt(p)}l-9 -4`;
}
art += `<path d="${blue}" stroke="#0c97e0" stroke-width="1" fill="none"/>`;

document.getElementById('model').innerHTML = `<g transform="translate(-249 -158)">${art}</g>`;
```
